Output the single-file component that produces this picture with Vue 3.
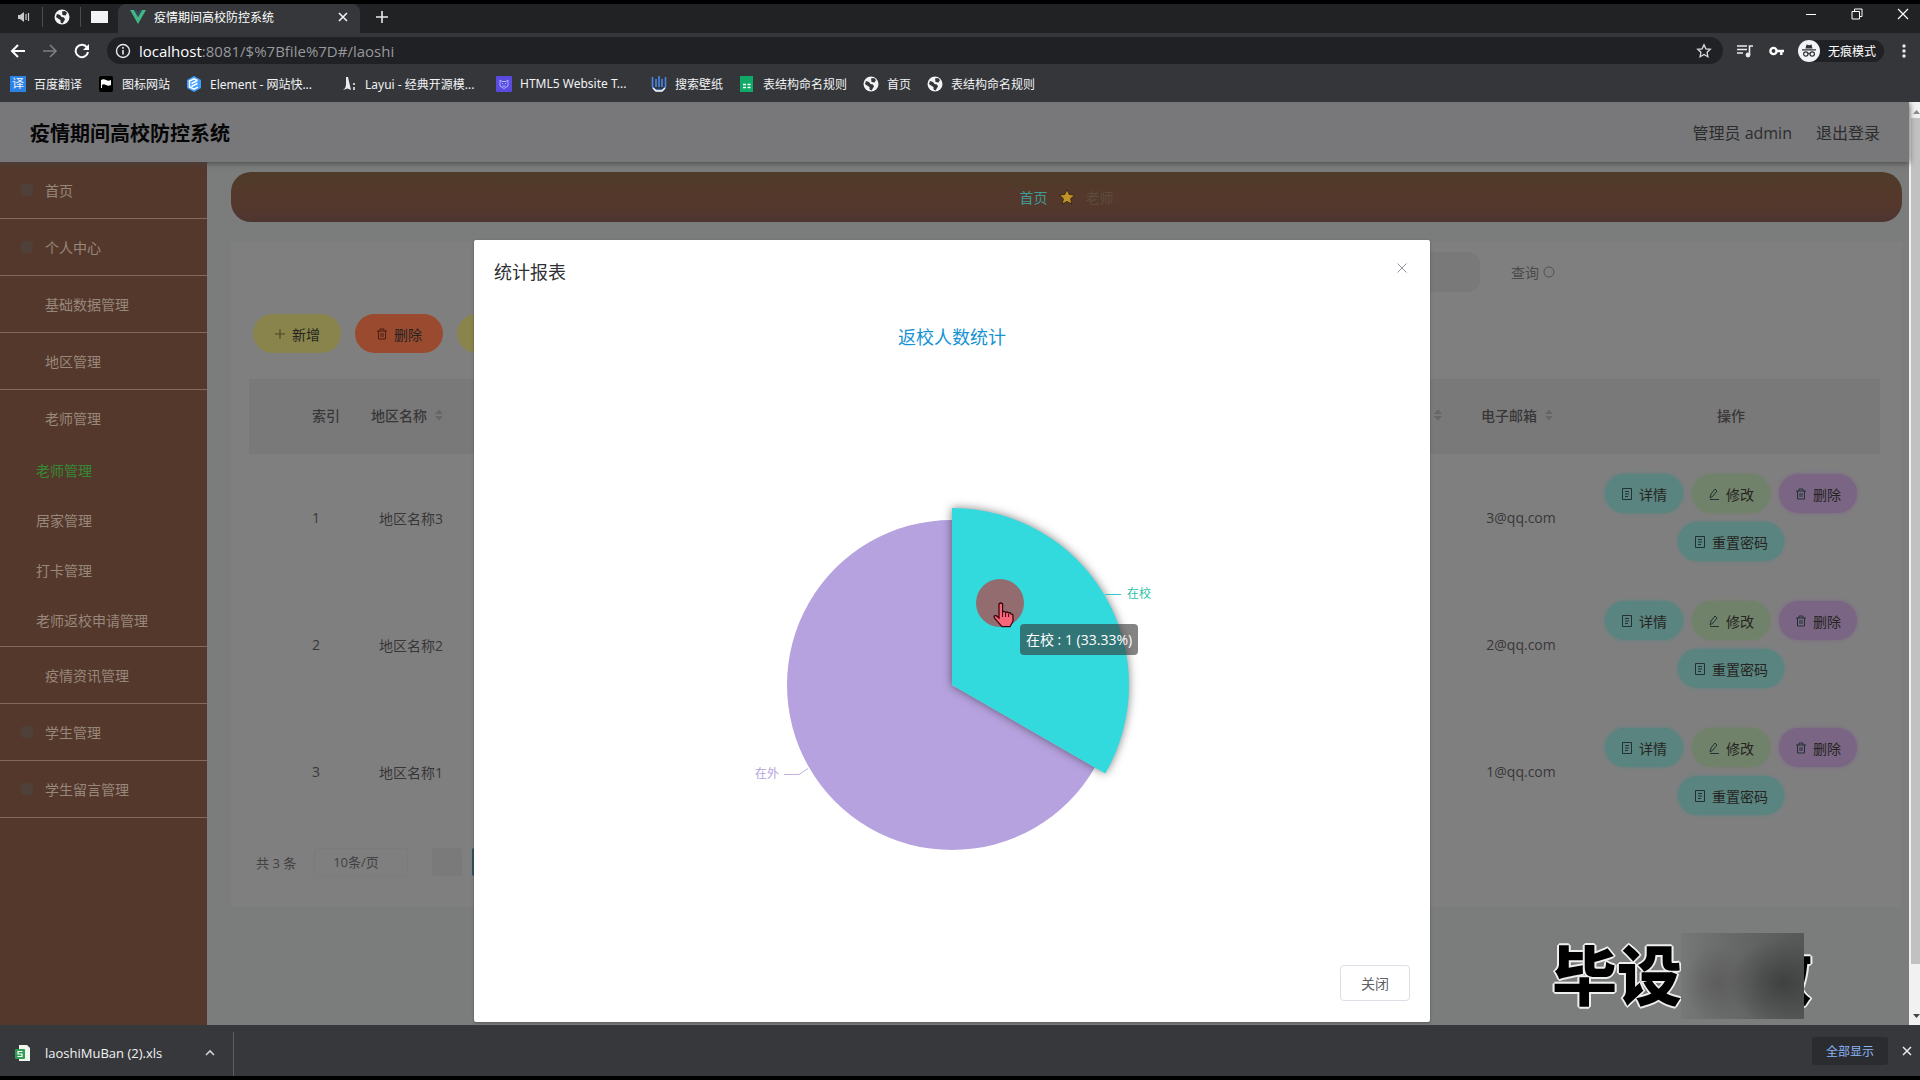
<template>
  <div class="browser">
    <div class="tab-strip">
      <div class="pinned">
        <svg width="14" height="14" viewBox="0 0 14 14">
          <path d="M1 5h2l4-3v10L3 9H1z" fill="#c8c8c8" />
          <path d="M9 4v6M11.5 3v8" stroke="#c8c8c8" stroke-width="1.2" />
        </svg>
      </div>
      <div class="pinned">
        <svg width="16" height="16" viewBox="0 0 16 16">
          <circle cx="8" cy="8" r="7.5" fill="#f1f3f4" />
          <path :d="globePath" fill="#2a2c2f" />
        </svg>
      </div>
      <div class="pinned last">
        <span class="window-icon"></span>
      </div>
      <div class="tab">
        <svg width="16" height="14" viewBox="0 0 16 14">
          <path d="M0 0h4l4 7 4-7h4L8 14z" fill="#41b883" />
          <path d="M4 0h2.500L8 2.600 9.500 0H12L8 7z" fill="#35495e" />
        </svg>
        <span class="tab-title">疫情期间高校防控系统</span>
        <button class="icon-btn" aria-label="关闭标签页">
          <svg width="10" height="10" viewBox="0 0 10 10">
            <path d="M1 1l8 8M9 1l-8 8" stroke="#f1f3f4" stroke-width="1.600" />
          </svg>
        </button>
      </div>
      <button class="icon-btn new-tab" aria-label="新标签页">
        <svg width="12" height="12" viewBox="0 0 12 12">
          <path d="M6 0v12M0 6h12" stroke="#e8eaed" stroke-width="1.600" />
        </svg>
      </button>
      <div class="window-controls">
        <button class="icon-btn" aria-label="最小化">
          <svg width="12" height="12" viewBox="0 0 12 12"><path d="M1 6.500h10" stroke="#fff" /></svg>
        </button>
        <button class="icon-btn" aria-label="还原">
          <svg width="12" height="12" viewBox="0 0 12 12">
            <path d="M1 3.500h7.500V11H1zM3.500 3.500V1H11v7.500H8.500" fill="none" stroke="#fff" />
          </svg>
        </button>
        <button class="icon-btn" aria-label="关闭">
          <svg width="12" height="12" viewBox="0 0 12 12">
            <path d="M1 1l10 10M11 1L1 11" stroke="#fff" stroke-width="1.200" />
          </svg>
        </button>
      </div>
    </div>

    <div class="toolbar">
      <div class="nav-buttons">
        <button class="icon-btn" aria-label="后退">
          <svg width="16" height="16" viewBox="0 0 16 16">
            <path d="M15 8H2M8 2L2 8l6 6" fill="none" stroke="#fff" stroke-width="2" />
          </svg>
        </button>
        <button class="icon-btn" aria-label="前进">
          <svg width="16" height="16" viewBox="0 0 16 16">
            <path d="M1 8h13M8 2l6 6-6 6" fill="none" stroke="#7d7f82" stroke-width="1.600" />
          </svg>
        </button>
        <button class="icon-btn" aria-label="刷新">
          <svg width="16" height="16" viewBox="0 0 16 16">
            <path d="M13 4.500A6.200 6.200 0 1 0 14 9" fill="none" stroke="#fff" stroke-width="2" />
            <path d="M15 1v6H9z" fill="#fff" />
          </svg>
        </button>
      </div>
      <div class="address">
        <svg width="16" height="16" viewBox="0 0 16 16">
          <circle cx="8" cy="8" r="6.500" fill="none" stroke="#e8eaed" stroke-width="1.400" />
          <path d="M8 7v4.500M8 4v1.700" stroke="#e8eaed" stroke-width="1.600" />
        </svg>
        <span class="url"><b>localhost</b>:8081/$%7Bfile%7D#/laoshi</span>
        <svg width="16" height="16" viewBox="0 0 16 16">
          <path
            d="M8 1.800l1.900 4 4.400.5-3.200 3 .8 4.400L8 11.500l-3.900 2.200.8-4.400-3.200-3 4.400-.5z"
            fill="none"
            stroke="#dadce0"
            stroke-width="1.300"
          />
        </svg>
      </div>
      <svg class="tool-icon" width="16" height="14" viewBox="0 0 16 14">
        <path d="M0 2h10M0 5.500h10M0 9h6" stroke="#e8eaed" stroke-width="1.600" />
        <path d="M12.500 11V2H16" fill="none" stroke="#e8eaed" stroke-width="1.600" />
        <circle cx="11" cy="11" r="2.400" fill="#e8eaed" />
      </svg>
      <svg class="tool-icon key" width="15" height="10" viewBox="0 0 15 10">
        <circle cx="4.500" cy="5" r="3.100" fill="none" stroke="#fff" stroke-width="2.400" />
        <path d="M7 5h8M12.300 5v4" stroke="#fff" stroke-width="2.400" />
      </svg>
      <div class="incognito">
        <svg width="22" height="22" viewBox="0 0 22 22">
          <circle cx="11" cy="11" r="11" fill="#f1f3f4" />
          <path d="M7.500 8.500l1-4 2.500.7 2.500-.7 1 4zM4 9.300h14v1.200H4z" fill="#303134" />
          <g fill="none" stroke="#303134" stroke-width="1.200">
            <circle cx="7.800" cy="14" r="2.200" />
            <circle cx="14.200" cy="14" r="2.200" />
            <path d="M10 13.700q1-.6 2 0" />
          </g>
        </svg>
        <span>无痕模式</span>
      </div>
      <svg class="dots" width="4" height="14" viewBox="0 0 4 14">
        <circle cx="2" cy="2" r="1.700" fill="#e8eaed" />
        <circle cx="2" cy="7" r="1.700" fill="#e8eaed" />
        <circle cx="2" cy="12" r="1.700" fill="#e8eaed" />
      </svg>
    </div>

    <nav class="bookmarks">
      <a
        v-for="(mark, i) in bookmarks"
        :key="i"
        href="#"
        class="bookmark"
        :class="{ wide: mark.wide }"
      >
        <span v-if="mark.icon === 'yi'" class="yi">译</span>
        <svg v-else width="16" height="16" viewBox="0 0 16 16">
          <template v-if="mark.icon === 'flag'">
            <rect x="1" y="0" width="14" height="16" rx="2" fill="#000" />
            <path d="M3 12V4q2.500-1.500 5 0t5 0v5q-2.500 1.500-5 0t-4 0v3z" fill="#fff" />
          </template>
          <template v-else-if="mark.icon === 'element'">
            <path d="M8 0l7 4v8l-7 4-7-4V4z" fill="#409eff" />
            <path d="M11.500 4.500L8 2.800 3.500 5v6L8 13.200l4-2M5.500 7.500l6-3M5.500 10.500l6-3" fill="none" stroke="#fff" stroke-width="1.500" />
          </template>
          <template v-else-if="mark.icon === 'layui'">
            <path d="M5 1h2l3 13-3.500-1.500L2 14q3-2 3-5z" fill="#e8eaed" />
            <path d="M13 7v2M13 11v3" stroke="#e8eaed" stroke-width="1.600" />
          </template>
          <template v-else-if="mark.icon === 'html5'">
            <rect width="16" height="16" rx="1" fill="#5b4be0" />
            <path d="M4 4l2 1.500h4L12 4v6l-4 2.500L4 10z" fill="none" stroke="#a9b6ff" />
            <path d="M6 7.500h1M9 7.500h1M6.500 10h3" stroke="#a9b6ff" />
          </template>
          <template v-else-if="mark.icon === 'wall'">
            <path d="M1.500 1v10l3 3h7l3-3V1M5 3v8M8 0v11M11 3v8" fill="none" stroke="#4a86e8" stroke-width="1.600" />
            <path d="M2 12l3 3h6l3-3" fill="none" stroke="#fff" stroke-width="1.400" />
          </template>
          <template v-else-if="mark.icon === 'sheet'">
            <path d="M1 0h13v16H1z" fill="#0fa968" />
            <path d="M4 8.500h3M8.500 8.500h3M4 11.500h3M8.500 11.500h3" stroke="#fff" stroke-width="1.400" />
          </template>
          <template v-else>
            <circle cx="8" cy="8" r="7.500" fill="#f1f3f4" />
            <path :d="globePath" fill="#35363a" />
          </template>
        </svg>
        <span>{{ mark.label }}</span>
      </a>
    </nav>

    <div class="viewport">
      <div class="page">
        <header class="page-header">
          <h1>疫情期间高校防控系统</h1>
          <div class="user">
            <span>管理员 admin</span>
            <a href="#">退出登录</a>
          </div>
        </header>

        <div class="page-body">
          <aside class="sidebar">
            <div v-for="item in menu" :key="item.label" class="menu-group">
              <a href="#" class="menu-item">
                <i class="menu-icon" :class="{ visible: item.icon }"></i>{{ item.label }}
              </a>
              <div v-if="item.children" class="submenu">
                <a
                  v-for="child in item.children"
                  :key="child"
                  href="#"
                  :class="{ active: child === current }"
                  >{{ child }}</a
                >
              </div>
            </div>
          </aside>

          <main class="content">
            <div class="breadcrumb">
              <a href="#">首页</a>
              <svg width="16" height="16" viewBox="0 0 14 14">
                <path
                  d="M7 .5l2 4.300 4.700.5-3.500 3.200 1 4.800L7 10.900l-4.200 2.400 1-4.800L.3 5.300 5 4.800z"
                  fill="#c0932a"
                  stroke="#33240f"
                  stroke-width=".8"
                />
              </svg>
              <span class="crumb-current">老师</span>
            </div>

            <section class="card">
              <form class="search" @submit.prevent>
                <input type="text" aria-label="老师姓名" />
                <button type="submit">
                  查询
                  <svg width="12" height="12" viewBox="0 0 12 12">
                    <circle cx="6" cy="6" r="5" fill="none" stroke="#535253" />
                  </svg>
                </button>
              </form>

              <div class="actions">
                <button class="pill olive">
                  <svg width="12" height="12" viewBox="0 0 12 12">
                    <path d="M6 1v10M1 6h10" stroke="#45421f" />
                  </svg>
                  新增
                </button>
                <button class="pill red">
                  <svg width="12" height="12" viewBox="0 0 12 12">
                    <path :d="trashPath" fill="none" stroke="#4a1d10" />
                  </svg>
                  删除
                </button>
                <button class="pill olive" aria-label="统计报表"></button>
              </div>

              <table>
                <colgroup>
                  <col class="col-check" />
                  <col class="col-index" />
                  <col class="col-area" />
                  <col />
                  <col class="col-phone" />
                  <col class="col-mail" />
                  <col class="col-ops" />
                </colgroup>
                <thead>
                  <tr>
                    <th></th>
                    <th class="left">索引</th>
                    <th>
                      <span class="sortable">地区名称<i class="caret"></i></span>
                    </th>
                    <th></th>
                    <th class="right"><i class="caret"></i></th>
                    <th>
                      <span class="sortable">电子邮箱<i class="caret"></i></span>
                    </th>
                    <th>操作</th>
                  </tr>
                </thead>
                <tbody>
                  <tr v-for="row in rows" :key="row.index">
                    <td></td>
                    <td class="left">{{ row.index }}</td>
                    <td>{{ row.area }}</td>
                    <td></td>
                    <td></td>
                    <td>{{ row.email }}</td>
                    <td>
                      <div class="ops">
                        <button v-for="op in ops" :key="op.label" class="pill small" :class="op.color">
                          <svg width="12" height="12" viewBox="0 0 12 12">
                            <path :d="op.path" fill="none" stroke="#223133" />
                          </svg>
                          {{ op.label }}
                        </button>
                      </div>
                    </td>
                  </tr>
                </tbody>
              </table>

              <div class="pagination">
                <span>共 3 条</span>
                <select aria-label="每页条数">
                  <option>10条/页</option>
                </select>
                <button class="page-btn" aria-label="上一页"></button>
                <button class="page-btn current" aria-label="第 1 页"></button>
              </div>
            </section>
          </main>
        </div>
      </div>

      <div class="scrollbar">
        <i class="arrow up"></i>
        <div class="thumb"></div>
        <i class="arrow down"></i>
      </div>

      <div class="dialog-layer">
        <div class="dialog" role="dialog" aria-label="统计报表">
          <div class="dialog-header">
            <h2>统计报表</h2>
            <button class="icon-btn close" aria-label="关闭对话框">
              <svg width="12" height="12" viewBox="0 0 12 12">
                <path d="M1.500 1.500l9 9M10.500 1.500l-9 9" stroke="#909399" />
              </svg>
            </button>
          </div>
          <div class="dialog-body">
            <h3>返校人数统计</h3>
            <div class="pie">
              <svg width="420" height="400" viewBox="0 0 420 400">
                <path :d="sector(165, 120, 360)" fill="#b6a2de" />
                <path class="hovered" :d="sector(177, 0, 120)" fill="#32dadd" />
                <path d="M363 109.500h16" stroke="#2ec7c9" />
                <path d="M42 289.500h15l9-6" fill="none" stroke="#c0b2dd" />
                <text x="385" y="113" fill="#2ebfa5">在校</text>
                <text x="13" y="293" fill="#b6a2de">在外</text>
                <circle cx="258" cy="118" r="24" fill="#936c70" />
                <path
                  d="M257 119q1.800-2 3.600 0v8q1.600-1.500 3 .4 1.700-1.100 3 .6 1.800-.8 2.700 1.200 1.700-.4 1.700 2v5l-3 5.500h-8l-7-8q-2.500-3.400 1.300-3l2.700 2.300z"
                  fill="#f9667a"
                  stroke="#3d0510"
                  stroke-width="1.300"
                />
                <path d="M260.600 127v5M263.600 128v4M266.600 129v3" stroke="#3d0510" />
              </svg>
              <div class="tooltip">在校 : 1 (33.33%)</div>
            </div>
          </div>
          <div class="dialog-footer">
            <button>关闭</button>
          </div>
        </div>
      </div>

      <div class="watermark">毕设代做<span class="mask"></span></div>
    </div>

    <footer class="downloads">
      <div class="download-item">
        <svg width="16" height="16" viewBox="0 0 16 16">
          <path d="M4 0h8l3 3v13H4z" fill="#eef6ee" />
          <rect x="0" y="4" width="10" height="10" rx="1" fill="#2f9e52" />
          <path d="M7.500 6.500H3V9h4v2.500H2.500" fill="none" stroke="#fff" stroke-width="1.200" />
        </svg>
        <span class="file-name">laoshiMuBan (2).xls</span>
        <button class="icon-btn" aria-label="更多操作">
          <svg width="10" height="8" viewBox="0 0 10 8">
            <path d="M1 6l4-4 4 4" fill="none" stroke="#d0d2d5" stroke-width="1.600" />
          </svg>
        </button>
      </div>
      <button class="show-all">全部显示</button>
      <button class="icon-btn" aria-label="关闭下载栏">
        <svg width="10" height="10" viewBox="0 0 10 10">
          <path d="M1 1l8 8M9 1l-8 8" stroke="#e8eaed" stroke-width="1.500" />
        </svg>
      </button>
    </footer>
  </div>
</template>

<script setup>
import { ref } from "vue";

const globePath =
  "M3 5l3 1 1.500 2L10 8.500l1 2-2.500 4Q6 14 6.500 11L4 9.500 2 8zM8 2.500l3-.5 2 2-1.500 2.500-3-.5z";
const trashPath = "M1 3h10M4 3V1h4v2M2.500 3v8h7V3M5 5v4M7 5v4";
const docPath = "M1.500 .5h9v11h-9zM4 3.500h4M4 6h4M4 8.500h3";
const penPath = "M2 10l1-4 4-5 2 2-4 5zM2 11.500h9";

const bookmarks = [
  { icon: "yi", label: "百度翻译" },
  { icon: "flag", label: "图标网站" },
  { icon: "element", label: "Element - 网站快...", wide: true },
  { icon: "layui", label: "Layui - 经典开源模...", wide: true },
  { icon: "html5", label: "HTML5 Website T...", wide: true },
  { icon: "wall", label: "搜索壁纸" },
  { icon: "sheet", label: "表结构命名规则" },
  { icon: "globe", label: "首页" },
  { icon: "globe", label: "表结构命名规则" },
];

const current = ref("老师管理");
const menu = [
  { label: "首页", icon: true },
  { label: "个人中心", icon: true },
  { label: "基础数据管理" },
  { label: "地区管理" },
  { label: "老师管理", children: ["老师管理", "居家管理", "打卡管理", "老师返校申请管理"] },
  { label: "疫情资讯管理" },
  { label: "学生管理", icon: true },
  { label: "学生留言管理", icon: true },
];

const rows = [
  { index: 1, area: "地区名称3", email: "3@qq.com" },
  { index: 2, area: "地区名称2", email: "2@qq.com" },
  { index: 3, area: "地区名称1", email: "1@qq.com" },
];

const ops = [
  { label: "详情", color: "teal", path: docPath },
  { label: "修改", color: "green", path: penPath },
  { label: "删除", color: "purple", path: trashPath },
  { label: "重置密码", color: "teal", path: docPath },
];

// pie sector around (210, 200), angles clockwise from the top
const sector = (r, from, to) => {
  const point = (deg) => {
    const a = (deg * Math.PI) / 180;
    return `${210 + r * Math.sin(a)} ${200 - r * Math.cos(a)}`;
  };
  const large = to - from > 180 ? 1 : 0;
  return `M210 200L${point(from)}A${r} ${r} 0 ${large} 1 ${point(to)}Z`;
};
</script>

<style>
body {
  margin: 0;
  background: #000;
}
</style>

<style scoped>
* {
  box-sizing: border-box;
}

.browser {
  display: flex;
  flex-direction: column;
  height: 100vh;
  padding: 4px 0;
  overflow: hidden;
  background: #000;
  font-family: "Open Sans", "Noto Sans CJK SC", sans-serif;
  font-size: 14px;
}

button,
input,
select {
  font: inherit;
  border: 0;
  padding: 0;
}

a {
  color: inherit;
  text-decoration: none;
}

svg {
  flex: none;
}

.icon-btn {
  display: flex;
  background: none;
}

/* browser chrome */
.tab-strip {
  display: flex;
  align-items: center;
  height: 29px;
  flex: none;
  padding-bottom: 3px;
  background: #202224;
  color: #fff;
  font-size: 12px;
}

.pinned {
  display: flex;
  align-items: center;
  justify-content: center;
  width: 38px;
  height: 20px;
  border-right: 1px solid #4a4c50;
}

.pinned:first-child {
  width: 43px;
  padding-left: 6px;
}

.pinned.last {
  width: 37px;
  border: 0;
}

.window-icon {
  width: 17px;
  height: 12px;
  background: #f1f3f4;
}

.tab {
  display: flex;
  align-items: center;
  align-self: flex-start;
  gap: 8px;
  width: 242px;
  height: 29px;
  padding: 0 12px 3px;
  border-radius: 8px 8px 0 0;
  background: #35373a;
}

.tab-title {
  flex: 1;
  white-space: nowrap;
}

.new-tab {
  margin-left: 16px;
}

.window-controls {
  display: flex;
  gap: 34px;
  margin-left: auto;
  padding: 0 11px 6px 0;
}

.toolbar {
  display: flex;
  align-items: center;
  height: 34px;
  flex: none;
  padding-top: 1px;
  background: #35363a;
  color: #fff;
}

.nav-buttons {
  display: flex;
  gap: 16px;
  padding: 0 17px 0 10px;
}

.address {
  display: flex;
  align-items: center;
  flex: 1;
  gap: 8px;
  height: 27px;
  padding: 0 11px 0 8px;
  border-radius: 14px;
  background: #202124;
}

.url {
  flex: 1;
  font-size: 15px;
  line-height: 20px;
  color: #96999d;
}

.url b {
  font-weight: 400;
  color: #fff;
}

.tool-icon {
  margin-left: 14px;
}

.tool-icon.key {
  margin-left: 16px;
}

.incognito {
  display: flex;
  align-items: center;
  gap: 8px;
  margin-left: 14px;
  padding-right: 8px;
  border-radius: 12px;
  background: #202124;
  font-size: 12px;
}

.dots {
  margin: 0 14px 0 18px;
}

.bookmarks {
  display: flex;
  align-items: center;
  gap: 16px;
  height: 35px;
  flex: none;
  padding: 0 0 2px 10px;
  background: #35363a;
  color: #f1f3f4;
  font-size: 12px;
  white-space: nowrap;
}

.bookmark {
  display: flex;
  align-items: center;
  gap: 8px;
}

.bookmark.wide {
  width: 139px;
  font-family: "Noto Sans", "Noto Sans CJK SC", sans-serif;
}

.yi {
  width: 16px;
  height: 16px;
  background: #2b83e8;
  line-height: 16px;
  text-align: center;
}

/* web page */
.viewport {
  position: relative;
  display: flex;
  flex: 1;
  min-height: 0;
  overflow: hidden;
}

.page {
  display: flex;
  flex-direction: column;
  flex: 1;
  background: #7b7c7c;
}

.page-header {
  position: relative;
  display: flex;
  align-items: center;
  justify-content: space-between;
  height: 60px;
  padding: 0 29px 0 30px;
  background: #78787a;
  box-shadow: 0 1px 6px #444;
}

h1 {
  margin: 0;
  font-size: 20px;
  color: #060606;
}

.user {
  display: flex;
  gap: 24px;
  font-size: 16px;
  color: #2c2c2d;
}

.page-body {
  display: flex;
  flex: 1;
}

.sidebar {
  width: 207px;
  background: #55382c;
  color: #98877b;
}

.menu-group {
  border-bottom: 1px solid #806a5b;
}

.menu-item {
  display: flex;
  align-items: center;
  gap: 12px;
  height: 56px;
  padding-left: 21px;
}

.menu-icon {
  width: 12px;
  height: 12px;
  border-radius: 4px;
}

.menu-icon.visible {
  background: #50403a;
}

.submenu a {
  display: block;
  height: 50px;
  padding-left: 36px;
  line-height: 50px;
}

.submenu .active {
  color: #338a35;
}

.content {
  flex: 1;
  padding: 10px 7px 0 24px;
}

.breadcrumb {
  display: flex;
  align-items: center;
  justify-content: center;
  gap: 11px;
  height: 50px;
  border-radius: 20px;
  background: linear-gradient(#4f3b29, #55382c 60%, #4d3631);
  color: #3e9c98;
}

.crumb-current {
  color: #5c4c3c;
}

.card {
  margin-top: 20px;
  padding: 10px 22px 18px 18px;
  background: #807f80;
}

.search {
  display: flex;
  justify-content: center;
  gap: 31px;
}

.search input {
  width: 906px;
  height: 40px;
  border-radius: 12px;
  background: #79797a;
}

.search button {
  display: flex;
  align-items: center;
  gap: 4px;
  background: none;
  color: #4b4a4b;
}

.actions {
  display: flex;
  gap: 14px;
  padding: 22px 0 26px 4px;
}

.pill {
  display: flex;
  align-items: center;
  justify-content: center;
  gap: 6px;
  width: 88px;
  height: 39px;
  border-radius: 20px;
  color: #262422;
}

.pill.small {
  width: auto;
  padding: 0 16px;
}

.olive {
  background: #88844c;
}

.red {
  background: #9a4a2f;
}

.teal {
  background: #59847f;
  box-shadow: 0 0 4px #59847f;
}

.green {
  background: #70826a;
  box-shadow: 0 0 4px #70826a;
}

.purple {
  background: #7a6684;
  box-shadow: 0 0 4px #7a6684;
}

table {
  width: 100%;
  table-layout: fixed;
  border-collapse: collapse;
  color: #383738;
}

.col-check {
  width: 53px;
}

.col-index {
  width: 59px;
}

.col-area {
  width: 100px;
}

.col-phone {
  width: 120px;
}

.col-mail {
  width: 122px;
}

.col-ops {
  width: 298px;
}

th,
td {
  padding: 0;
  text-align: center;
}

th {
  height: 75px;
  padding-bottom: 3px;
  background: #7a797a;
  font-weight: 500;
}

td {
  height: 127px;
}

.left {
  padding-left: 10px;
  text-align: left;
}

.right {
  text-align: right;
  padding-right: 18px;
}

.sortable {
  display: inline-flex;
  align-items: center;
  white-space: nowrap;
}

.caret {
  display: inline-block;
  width: 8px;
  height: 11px;
  margin: 0 8px;
  background: #666567;
  clip-path: polygon(50% 0, 100% 40%, 0 40%, 0 60%, 100% 60%, 50% 100%, 0 60%, 0 40%);
}

.right .caret {
  margin: 0;
}

.ops {
  display: flex;
  flex-wrap: wrap;
  justify-content: center;
  gap: 9px;
}

.pagination {
  display: flex;
  align-items: center;
  height: 54px;
  padding-left: 7px;
  font-size: 13px;
  color: #414141;
}

.pagination select {
  width: 94px;
  height: 28px;
  margin: 0 24px 0 18px;
  padding-left: 18px;
  border: 1px solid #7b7b7b;
  border-radius: 3px;
  appearance: none;
  background: transparent;
  color: #414141;
}

.page-btn {
  width: 30px;
  height: 28px;
  margin-right: 10px;
  border-radius: 2px;
  background: #7a7a7b;
}

.page-btn.current {
  background: #33505f;
}

.scrollbar {
  display: flex;
  flex-direction: column;
  align-items: flex-end;
  justify-content: space-between;
  width: 11px;
  border-left: 2px solid #f1f1f1;
  background: #f1f1f1;
}

.thumb {
  width: 9px;
  flex: 1;
  margin: 4px 0 50px;
  background: #c1c1c1;
}

.arrow {
  width: 7px;
  height: 4px;
  margin: 8px 0 0;
  background: #888;
  clip-path: polygon(50% 0, 100% 100%, 0 100%);
}

.arrow.down {
  margin: 0 0 7px;
  background: #444;
  clip-path: polygon(0 0, 100% 0, 50% 100%);
}

/* dialog */
.dialog-layer {
  position: absolute;
  inset: 0 16px 0 0;
  display: flex;
  align-items: flex-start;
  justify-content: center;
}

.dialog {
  width: 50.2%;
  margin-top: 138px;
  border-radius: 2px;
  background: #fff;
  box-shadow: 0 1px 3px rgba(0, 0, 0, 0.3);
}

.dialog-header {
  display: flex;
  justify-content: space-between;
  padding: 20px 22px 10px 20px;
}

.close {
  padding-top: 2px;
}

h2,
h3 {
  margin: 0;
  font-size: 18px;
  font-weight: 400;
  line-height: 24px;
  color: #303133;
}

.dialog-body {
  display: flex;
  flex-direction: column;
  align-items: center;
  padding: 31px 20px 70px;
}

h3 {
  color: #1592d2;
}

.pie {
  position: relative;
  margin-top: 136px;
}

.pie svg {
  display: block;
  overflow: visible;
}

.pie text {
  font-size: 12px;
}

.hovered {
  filter: drop-shadow(0 0 5px rgba(0, 0, 0, 0.5));
}

.tooltip {
  position: absolute;
  left: 278px;
  top: 139px;
  padding: 5px 6px;
  border-radius: 4px;
  background: rgba(50, 50, 50, 0.6);
  color: #fff;
  line-height: 21px;
  white-space: nowrap;
}

.dialog-footer {
  display: flex;
  justify-content: flex-end;
  padding: 10px 20px 21px;
}

.dialog-footer button {
  width: 70px;
  height: 36px;
  border: 1px solid #dcdfe6;
  border-radius: 4px;
  background: #fff;
  color: #606266;
}

.watermark {
  position: absolute;
  right: 108px;
  bottom: 12px;
  font-size: 65px;
  font-weight: 900;
  line-height: 76px;
  color: #000;
  text-shadow: 2px 0 #eee, -2px 0 #eee, 0 2px #eee, 0 -2px #eee, 1px 1px #eee,
    -1px -1px #eee, 1px -1px #eee, -1px 1px #eee;
}

/* smeared patch over the end of the watermark */
.mask {
  position: absolute;
  right: 8px;
  top: -4px;
  width: 123px;
  height: 86px;
  background: radial-gradient(ellipse 55px 45px at 84% 58%, #3f4040, transparent),
    radial-gradient(ellipse 34px 38px at 30% 58%, #5c5d5c, transparent),
    linear-gradient(90deg, #767777, #666767 45%, #565757);
}

/* download bar */
.downloads {
  display: flex;
  align-items: center;
  height: 51px;
  flex: none;
  padding-right: 8px;
  background: #37383b;
  color: #f1f3f4;
}

.download-item {
  display: flex;
  align-items: center;
  width: 234px;
  height: 44px;
  margin: 7px auto 0 0;
  padding: 0 18px 3px 15px;
  border-right: 1px solid #5d5e61;
}

.file-name {
  flex: 1;
  padding-left: 14px;
  font-size: 13px;
}

.show-all {
  width: 76px;
  height: 28px;
  margin-right: 14px;
  border-radius: 3px;
  background: #2b2c30;
  color: #8ab4f8;
  font-size: 12px;
}
</style>
